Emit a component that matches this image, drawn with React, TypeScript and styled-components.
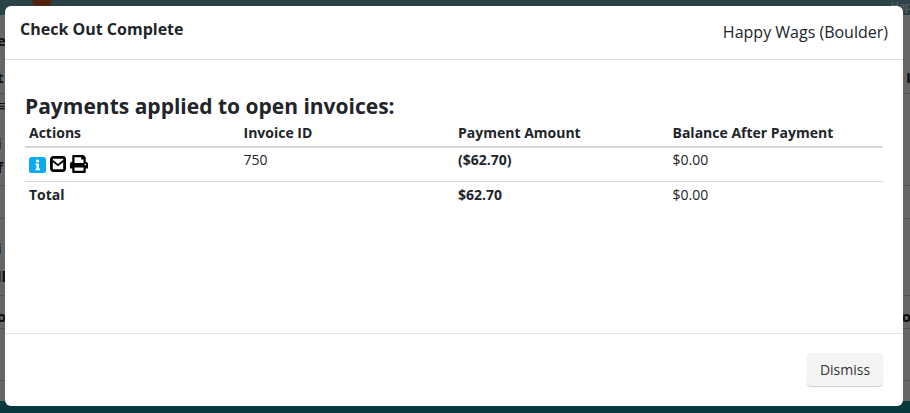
import { FaPrint } from 'react-icons/fa'
import styled, { createGlobalStyle } from 'styled-components'

interface BackRow {
  height: number
  left?: string
  right?: string
  line?: boolean
}

const BACK_ROWS: BackRow[] = [
  { height: 15 },
  { height: 20, left: 'e' },
  { height: 17 },
  { height: 20, left: 't', right: 'I' },
  { height: 7, line: true },
  { height: 6 },
  { height: 10, left: '≡' },
  { height: 28 },
  { height: 10, left: 'i' },
  { height: 13 },
  { height: 12, left: 'f' },
  { height: 13, line: true },
  { height: 33, line: true },
  { height: 20 },
  { height: 17, left: 'i' },
  { height: 15 },
  { height: 10, left: 'll' },
  { height: 15, line: true },
  { height: 14 },
  { height: 12, left: 'o', right: 'o' },
  { height: 7, line: true },
  { height: 52, line: true },
  { height: 20 },
]

const GlobalStyle = createGlobalStyle`
  html, body {
    margin: 0;
    padding: 0;
    height: 100%;
    overflow: hidden;
  }

  body {
    font-family: "Open Sans", "Noto Sans", sans-serif;
    color: #212529;
  }
`

const Page = styled.div`
  position: relative;
  width: 910px;
  height: 413px;
  overflow: hidden;
  display: flex;
  flex-direction: column;
  background: #ffffff;
`

const TopBar = styled.div`
  height: 15px;
  flex-shrink: 0;
  display: flex;
  align-items: flex-start;
  justify-content: space-between;
  padding-left: 32px;
  background: #6ba6b5;
  color: #ffffff;
  font-size: 11px;
  line-height: 12px;
  overflow: hidden;
`

const LogoBlob = styled.div`
  width: 20px;
  height: 10px;
  border-radius: 0 0 10px 10px;
  background: #c85a1e;
`

const TopUser = styled.span`
  margin-right: -14px;
`

const BackRows = styled.div`
  flex: 1;
  min-height: 0;
  overflow: hidden;
`

const BackRowBox = styled.div<{ $height: number; $line?: boolean }>`
  box-sizing: border-box;
  height: ${(p) => p.$height}px;
  display: flex;
  align-items: center;
  justify-content: space-between;
  border-bottom: ${(p) => (p.$line ? '1px solid #cccccc' : 'none')};
  font-size: 15px;
  font-weight: 700;
  color: #222222;
  line-height: 10px;
`

const LeftGlyph = styled.span`
  margin-left: -3px;
`

const RightGlyph = styled.span`
  margin-right: -1px;
`

const BottomBar = styled.div`
  height: 12px;
  flex-shrink: 0;
  background: #12929c;
`

const Overlay = styled.div`
  position: absolute;
  inset: 0;
  background: rgba(0, 0, 0, 0.6);
`

const Modal = styled.div`
  position: absolute;
  left: 5px;
  top: 6px;
  width: 898px;
  height: 400px;
  display: flex;
  flex-direction: column;
  background: #ffffff;
  border-radius: 6px;
`

const ModalHeader = styled.div`
  box-sizing: border-box;
  height: 54px;
  flex-shrink: 0;
  display: flex;
  align-items: flex-start;
  justify-content: space-between;
  padding: 13px 15px 0;
  border-bottom: 1px solid #e0e0e0;
`

const ModalTitle = styled.div`
  font-size: 16px;
  line-height: 20px;
  font-weight: 700;
  color: #212529;
`

const Location = styled.div`
  font-size: 16px;
  line-height: 26px;
  color: #212529;
`

const ModalBody = styled.div`
  flex: 1;
  min-height: 0;
  padding: 33px 20px 0;
`

const Heading = styled.h3`
  margin: 0;
  font-size: 21px;
  line-height: 26px;
  font-weight: 700;
  color: #212529;
`

const Table = styled.table`
  width: 858px;
  border-collapse: collapse;
  table-layout: fixed;
  font-size: 14px;
  line-height: 19px;
`

const HeadCell = styled.th`
  padding: 4px 4px 4px;
  text-align: left;
  font-weight: 700;
  border-bottom: 2px solid #d6d6d6;
`

const Cell = styled.td<{ $bold?: boolean }>`
  padding: 2px 4px 4px;
  vertical-align: top;
  font-weight: ${(p) => (p.$bold ? 700 : 400)};
`

const ActionRow = styled.tr`
  border-bottom: 1px solid #d6d6d6;
  height: 34px;
`

const TotalCell = styled(Cell)`
  padding-top: 3px;
`

const IconRow = styled.div`
  display: flex;
  align-items: flex-start;
  gap: 4px;
  margin-top: 5px;
  color: #000000;
`

const InfoSvg = styled.svg`
  margin-top: 2px;
`

const MailSvg = styled.svg`
  margin-top: 1px;
`

const ModalFooter = styled.div`
  box-sizing: border-box;
  height: 73px;
  flex-shrink: 0;
  display: flex;
  justify-content: flex-end;
  align-items: flex-start;
  padding: 19px 20px 0 0;
  border-top: 1px solid #e0e0e0;
`

const DismissButton = styled.button`
  width: 76px;
  height: 33px;
  padding: 0;
  border: none;
  border-radius: 4px;
  background: #f4f4f4;
  box-shadow: 0 1px 1px rgba(0, 0, 0, 0.2);
  color: #333333;
  font-family: "Open Sans", sans-serif;
  font-size: 14px;
`

function InfoIcon() {
  return (
    <InfoSvg width="17" height="16" viewBox="0 0 17 16">
      <rect width="17" height="16" rx="2.5" fill="#0caaee" />
      <path d="M7 2.8h3v2.4H7zM6.5 6.5h3.5v5.2h1v1.6H6.5v-1.6h1V8.1h-1z" fill="#ffffff" />
    </InfoSvg>
  )
}

function MailIcon() {
  return (
    <MailSvg width="16" height="16" viewBox="0 0 16 16" fill="none" stroke="#000000">
      <rect x="1.4" y="1.4" width="13.2" height="13.2" rx="2" strokeWidth="2.8" />
      <path d="M2.5 4.8 8 9.2l5.5-4.4" strokeWidth="1.8" />
    </MailSvg>
  )
}

export default function App() {
  return (
    <>
      <GlobalStyle />
      <Page>
        <TopBar>
          <LogoBlob />
          <TopUser>Happy</TopUser>
        </TopBar>
        <BackRows>
          {BACK_ROWS.map((row, i) => (
            <BackRowBox key={i} $height={row.height} $line={row.line}>
              <LeftGlyph>{row.left}</LeftGlyph>
              <RightGlyph>{row.right}</RightGlyph>
            </BackRowBox>
          ))}
        </BackRows>
        <BottomBar />
        <Overlay />
        <Modal>
          <ModalHeader>
            <ModalTitle>Check Out Complete</ModalTitle>
            <Location>Happy Wags (Boulder)</Location>
          </ModalHeader>
          <ModalBody>
            <Heading>Payments applied to open invoices:</Heading>
            <Table>
              <thead>
                <tr>
                  <HeadCell>Actions</HeadCell>
                  <HeadCell>Invoice ID</HeadCell>
                  <HeadCell>Payment Amount</HeadCell>
                  <HeadCell>Balance After Payment</HeadCell>
                </tr>
              </thead>
              <tbody>
                <ActionRow>
                  <Cell>
                    <IconRow>
                      <InfoIcon />
                      <MailIcon />
                      <FaPrint size={18} />
                    </IconRow>
                  </Cell>
                  <Cell>750</Cell>
                  <Cell $bold>($62.70)</Cell>
                  <Cell>$0.00</Cell>
                </ActionRow>
                <tr>
                  <TotalCell $bold>Total</TotalCell>
                  <TotalCell />
                  <TotalCell $bold>$62.70</TotalCell>
                  <TotalCell>$0.00</TotalCell>
                </tr>
              </tbody>
            </Table>
          </ModalBody>
          <ModalFooter>
            <DismissButton>Dismiss</DismissButton>
          </ModalFooter>
        </Modal>
      </Page>
    </>
  )
}
